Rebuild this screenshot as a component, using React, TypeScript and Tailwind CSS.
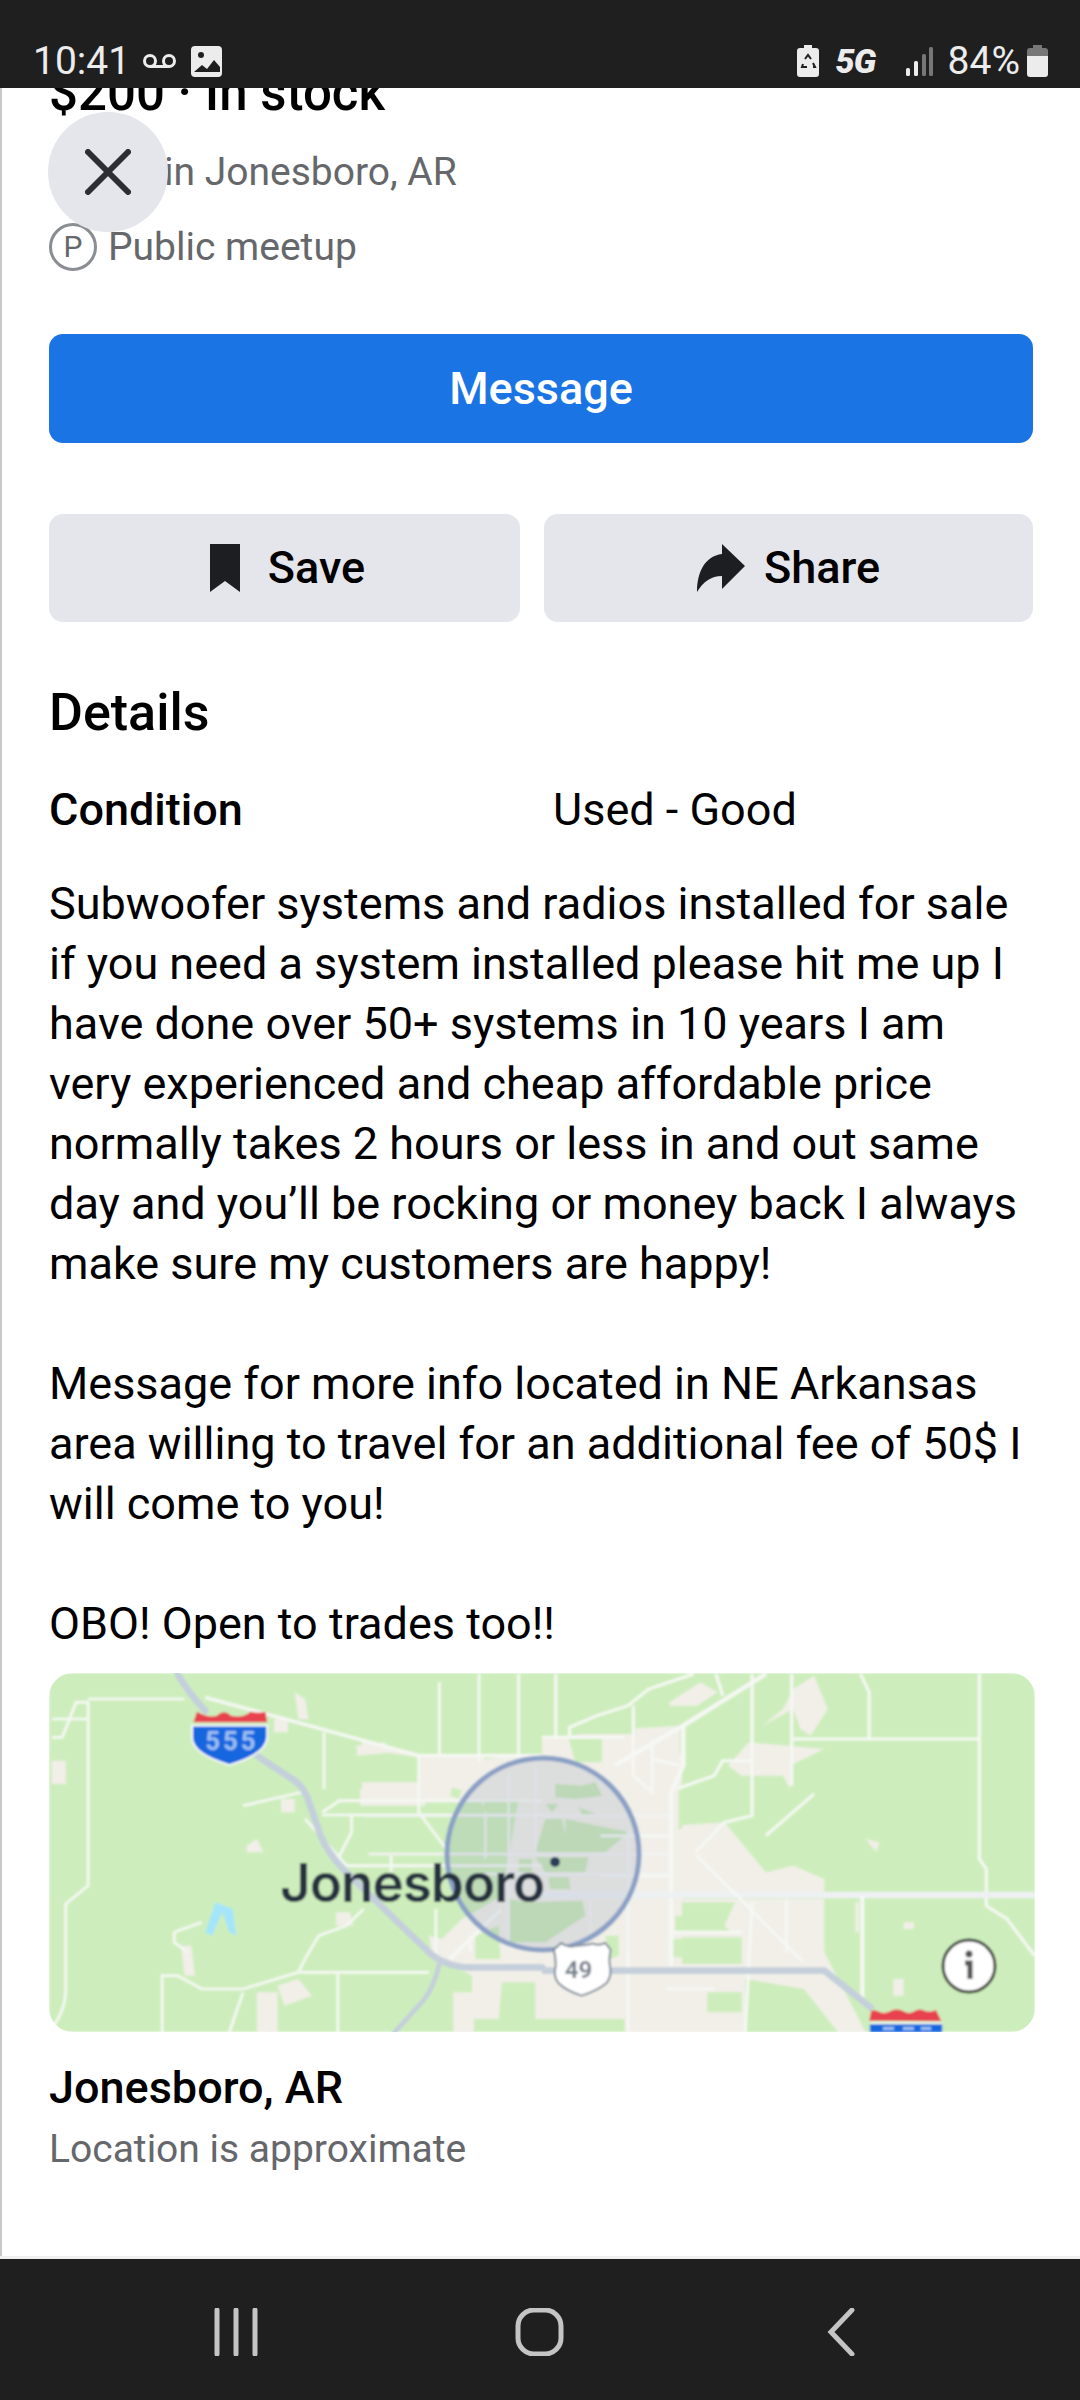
const lines1 = [
  'Subwoofer systems and radios installed for sale',
  'if you need a system installed please hit me up I',
  'have done over 50+ systems in 10 years I am',
  'very experienced and cheap affordable price',
  'normally takes 2 hours or less in and out same',
  'day and you’ll be rocking or money back I always',
  'make sure my customers are happy!',
]

const lines2 = [
  'Message for more info located in NE Arkansas',
  'area willing to travel for an additional fee of 50$ I',
  'will come to you!',
]

const cropLeft = 'translate(0 1660) scale(0.3444 0.3333)'
const cropRight = 'translate(540 1660) scale(0.3444 0.3333)'
const cropCenter = 'translate(360 1720) scale(0.3333)'

function StatusBar() {
  return (
    <div className="relative z-10 flex h-[88px] items-end justify-between bg-[#1f1f1f] pb-[4px] pl-[33px] pr-[32px] text-[39px] leading-[46px] text-[#ececec]">
      <div className="flex items-center">
        <span>10:41</span>
        <svg viewBox="0 0 35 14" className="ml-[12px] h-[14px] w-[35px]" fill="none" stroke="#ececec" strokeWidth="3">
          <circle cx="8" cy="7" r="5.5" />
          <circle cx="27" cy="7" r="5.5" />
          <path d="M8 12.5h19" />
        </svg>
        <svg viewBox="0 0 31 31" className="ml-[14px] h-[31px] w-[31px]">
          <rect width="31" height="31" rx="4" fill="#ececec" />
          <circle cx="10" cy="9" r="3" fill="#1f1f1f" />
          <path d="M3 26l8-7 5 4 7-9 6 7v5z" fill="#1f1f1f" />
        </svg>
      </div>
      <div className="flex items-center">
        <svg viewBox="0 0 22 32" className="h-[32px] w-[22px]">
          <path d="M7 0h8v3h4a3 3 0 0 1 3 3v23a3 3 0 0 1-3 3H3a3 3 0 0 1-3-3V6a3 3 0 0 1 3-3h4z" fill="#ececec" />
          <path d="M8 14l3-4 3 4M6 19l-1 3h5M16 22h2l-2-4" fill="none" stroke="#1f1f1f" strokeWidth="2" />
        </svg>
        <span className="ml-[17px] w-[44px] text-[34px] font-black italic leading-none tracking-[-1px]">5G</span>
        <svg viewBox="0 0 27 29" className="ml-[26px] h-[29px] w-[27px]">
          <rect x="0" y="21" width="4" height="8" rx="1.5" fill="#ececec" />
          <rect x="8" y="14" width="4" height="15" rx="1.5" fill="#ececec" />
          <rect x="16" y="7" width="4" height="22" rx="1.5" fill="#777" />
          <rect x="23" y="0" width="4" height="29" rx="1.5" fill="#777" />
        </svg>
        <span className="ml-[15px]">84%</span>
        <svg viewBox="0 0 21 32" className="ml-[7px] h-[32px] w-[21px]">
          <path d="M6 0h9v3h3a3 3 0 0 1 3 3v6H0V6a3 3 0 0 1 3-3h3z" fill="#777" />
          <path d="M0 11h21v18a3 3 0 0 1-3 3H3a3 3 0 0 1-3-3z" fill="#ececec" />
        </svg>
      </div>
    </div>
  )
}

function MapDrawing() {
  return (
    <svg viewBox="47 1674 986 359" className="block h-[359px] w-[986px]">
      <defs>
        <filter id="soft" x="-2%" y="-2%" width="104%" height="104%">
          <feGaussianBlur stdDeviation="0.9" />
        </filter>
      </defs>
      <g filter="url(#soft)">
        <rect x="47" y="1674" width="986" height="359" fill="#cdeebc" />

        {/* land use, left side */}
        <g transform={cropLeft} fill="#f1efe8">
          <path d="M145 305h40v70h-40zM790 180h40v40h-40zM850 100l30 20l10 60h-30zM1030 260l80 -10l30 30l-110 10zM810 420h40v40h-40zM710 560l30 -20l20 40h-50zM520 860l30 0l10 90h-30zM1240 830l40 10l10 60h-40zM970 760h40l10 40h-50zM740 1000h60v120h-60zM800 980l60 -20l40 50l-80 30z" />
          <path d="M1040 390L1210 380V290H1400V440H1040z" />
          <path d="M1310 1000h60v120h-60z" />
          <path d="M620 730l50 20l10 80l-20 -10l-20 -60l-30 70l-20 -10z" fill="#a5e5fb" />
        </g>

        {/* land use, right side */}
        <g transform={cropRight} fill="#f1efe8">
          <path d="M0 240L240 210L400 200V400L380 420V710H0z" />
          <path d="M380 500L530 490L650 640L730 620L820 660V710H380z" />
          <path d="M240 720H820V880L940 1120H240z" />
          <path d="M370 130l90 -60l50 30l-60 40h-80zM640 200l60 -50l30 -60l60 -40l40 100l-50 80l-30 -20l-20 -60zM540 320l60 -70l220 20l-100 50v70l-20 -40h-120zM940 540l40 10l-10 30zM1050 790h30v20h-30zM1020 960h30v50h-30zM900 730h20v90h-20z" />
          <g fill="#cdeebc">
            <path d="M400 730h160l-30 70l20 20H390zM380 835h200v80H400zM480 1000h100v60H480zM820 730h90v150l-90 -30z" />
            <path d="M590 960l170 30l100 130H590z" />
          </g>
        </g>

        {/* land use, around the circle */}
        <g transform={cropCenter}>
          <path d="M170 110L330 125L480 105H960V900H330V770L250 730L210 690L300 600L420 530L470 240H170z" fill="#f1efe8" />
          <path d="M0 60L170 105V115L0 90zM0 190H170V250H0z" fill="#f1efe8" />
          <g fill="#cdeebc">
            <path d="M240 0H340V100L280 90L240 100zM360 0H440V100H400zM470 0H580V50L470 60zM620 60H720V130H640zM590 0H820V45H590z" />
            <path d="M190 250H360V285H190zM200 300H360L430 350L400 400H210z" />
            <path d="M420 790H520V900H410zM340 650L410 620L415 720H340z" />
            <path d="M940 590H960V640H940zM930 660H960V715H930zM950 200H960V330H950z" />
            <path d="M270 205L300 215L290 240L265 230z" />
          </g>
          <path d="M580 195L660 200L700 190L720 230L640 240L580 235zM550 255H590L570 280zM650 265L700 285H660zM610 300L800 340L730 400H520L550 300H600L610 350zM520 415H680L670 460H550zM560 475H620L625 510H565zM500 550L660 545L670 590L550 670L440 670L440 540zM470 420H510V460H470z" fill="#cbe9ba" />
          <path d="M730 650H770V710L745 720z" fill="#cdeebc" />
        </g>

        {/* minor roads */}
        <g transform={cropLeft} stroke="#f6f8f4" strokeWidth="8" fill="none">
          <path d="M145 235H175L215 130H250V680L185 735V1000Q180 1060 150 1100" />
          <path d="M250 120H530" />
          <path d="M145 180H250" />
          <path d="M590 115L1210 290H1568" strokeWidth="10" />
          <path d="M935 220V390" />
          <path d="M1270 70V290M1385 45V310M1500 45V300" />
          <path d="M700 440L870 400" />
          <path d="M930 460L980 425H1568M930 468H1568" />
          <path d="M1210 290V460L1290 570" />
          <path d="M1015 470V520L980 590V620H1568" />
          <path d="M1130 590V640" />
          <path d="M500 820L580 790M500 820V850L540 880" />
          <path d="M465 1120V950H510L580 990H700L860 940L880 900L920 830L1000 800L1050 750" />
          <path d="M700 1000L660 1120M860 940H1240M975 945V1120" />
          <path d="M1260 750V900M1360 880V830" />
          <path d="M1300 900L1450 750" strokeWidth="12" />
          <path d="M880 480L1000 620" />
        </g>
        <g transform={cropRight} stroke="#f6f8f4" strokeWidth="9" fill="none">
          <path d="M650 45L410 200L210 320" strokeWidth="13" />
          <path d="M40 45V240M0 235H240M80 230V205L160 170L250 140L310 90L440 45" />
          <path d="M505 45L525 110" />
          <path d="M265 140V350L320 400V240M320 300L400 320" />
          <path d="M410 200V320L375 400V920" strokeWidth="13" />
          <path d="M390 390L500 350L525 305H610V470L530 490L445 580" />
          <path d="M610 45V300M725 45V380M725 240H950V100L925 45M950 240H1270V45" />
          <path d="M1270 45V600L1290 630V740L1350 780L1430 890" />
          <path d="M650 530L790 405" />
          <path d="M0 708H1430" stroke="#eef1f3" strokeWidth="20" />
          <path d="M930 710V1020" strokeWidth="12" />
          <path d="M450 590L760 910M610 730L590 1120M710 720V880M250 720V1120M360 990H500M380 820H580" />
          <path d="M170 530H380M170 650H380" />
        </g>
        <g transform={cropCenter} stroke="#f3f4f4" strokeWidth="7" fill="none">
          <path d="M0 290H920M20 405H920M350 465H920M440 160V690M520 140V400M685 540V660M800 330V700M370 280V420" />
        </g>

        {/* highways */}
        <g transform={cropLeft} stroke="#c4cfdb" strokeWidth="20" fill="none" strokeLinecap="round">
          <path d="M510 45Q540 100 590 155M740 290L850 365Q880 385 895 440L925 530Q950 590 1000 640L1230 870Q1270 915 1340 925H1568" />
          <path d="M1270 915Q1250 1000 1210 1040L1140 1120" strokeWidth="14" />
        </g>
        <path transform={cropRight} d="M0 935H820L960 1050" stroke="#c4cfdb" strokeWidth="20" fill="none" />

        {/* interstate shields */}
        <g transform={cropLeft}>
          <path d="M556 190L566 158Q600 178 624 170Q645 150 665 170Q700 178 722 158Q745 165 765 158L770 190z" fill="#e8434f" />
          <path d="M552 200H770V235Q768 285 660 318Q552 285 552 235z" fill="#1266e0" stroke="#fff" strokeWidth="5" />
          <text x="590" y="272" fontFamily="Roboto, sans-serif" fontWeight="700" fontSize="75" fill="#9cc0f2" textLength="146">555</text>
        </g>
        <g transform={cropRight}>
          <path d="M950 1085l6 -30q12 -4 24 4q14 8 34 -4q20 -8 40 4q14 8 30 -4q16 -8 30 2q16 4 30 -4l16 34z" fill="#e8434f" />
          <rect x="952" y="1096" width="210" height="24" fill="#1266e0" />
          <path d="M952 1092h210" stroke="#fff" strokeWidth="5" />
          <path d="M990 1108h32M1048 1108h32M1100 1108h30" stroke="#9cc0f2" strokeWidth="10" />
        </g>

        {/* accuracy circle */}
        <circle cx="541" cy="1855" r="96" fill="#6f83aa" fillOpacity="0.16" stroke="#8ba0c6" strokeWidth="5" />
        <circle cx="553" cy="1863" r="5" fill="#2c3e5c" />

        {/* US 49 shield */}
        <g transform={cropCenter}>
          <path d="M598 672Q620 688 642 680Q670 678 692 674Q712 682 730 672L746 692Q740 722 744 742Q750 772 734 792Q704 816 659 830Q614 816 589 792Q573 772 581 742Q581 712 575 692z" fill="#fff" stroke="#7f8b98" strokeWidth="6" />
          <text x="608" y="776" fontFamily="Roboto, sans-serif" fontWeight="700" fontSize="72" fill="#7a8490">49</text>
        </g>

        {/* city label */}
        <text x="278" y="1903" fontFamily="Inter, Roboto, sans-serif" fontWeight="600" fontSize="53" fill="#263340" letterSpacing="-1">Jonesboro</text>

        {/* info button */}
        <circle cx="967" cy="1967" r="26" fill="#fff" stroke="#3a3f3a" strokeWidth="3" />
        <circle cx="967" cy="1955" r="3.5" fill="#555" />
        <path d="M963 1964h5v16" stroke="#555" strokeWidth="5" fill="none" />
      </g>
    </svg>
  )
}

export default function App() {
  return (
    <div className="relative flex h-[2400px] w-[1080px] flex-col overflow-hidden bg-white font-['Roboto',sans-serif]">
      <StatusBar />

      <div className="relative flex-1 overflow-hidden border-l-2 border-[#c9c9c9] pl-[47px] pr-[47px]">
        <div className="mt-[-22px] text-[51px] font-medium leading-[54px] text-black">$200 · In stock</div>

        <div className="mt-[29px] pl-[115px] text-[39px] leading-[46px] text-[#65676b]">in Jonesboro, AR</div>

        <div className="mt-[28px] flex items-center text-[39px] leading-[46px] text-[#65676b]">
          <div className="flex h-[48px] w-[48px] items-center justify-center rounded-full border-[3px] border-[#8a8d91]">
            <span className="text-[30px] leading-none">P</span>
          </div>
          <span className="ml-[11px]">Public meetup</span>
        </div>

        <div className="mt-[63px] flex h-[109px] items-center justify-center rounded-[14px] bg-[#1b74e4] text-[45px] font-medium text-white">
          Message
        </div>

        <div className="mt-[71px] flex gap-[24px]">
          <div className="flex h-[108px] w-[471px] items-center justify-center rounded-[14px] bg-[#e4e6eb] pl-[6px] text-[45px] font-medium text-black">
            <svg viewBox="0 0 30 48" className="mr-[28px] h-[48px] w-[30px]">
              <path d="M0 0h30v48L15 37L0 48z" fill="#1c1e21" />
            </svg>
            Save
          </div>
          <div className="flex h-[108px] w-[489px] items-center justify-center rounded-[14px] bg-[#e4e6eb] text-[45px] font-medium text-black">
            <svg viewBox="0 0 48 48" className="mr-[19px] h-[48px] w-[48px]">
              <path d="M25 0L48 22L25 45V32C14 32 6 38 0 48C0 28 8 12 25 10z" fill="#1c1e21" />
            </svg>
            Share
          </div>
        </div>

        <div className="mt-[62px] text-[52px] font-medium leading-[58px] text-black">Details</div>

        <div className="mt-[43px] flex text-[45px] leading-[50px] text-black">
          <div className="w-[504px] font-medium">Condition</div>
          <div>Used - Good</div>
        </div>

        <div className="mt-[39px] text-[45px] leading-[60px] text-black">
          {lines1.map((line) => (
            <div key={line} className="whitespace-nowrap">{line}</div>
          ))}
          <div className="h-[60px]" />
          {lines2.map((line) => (
            <div key={line} className="whitespace-nowrap">{line}</div>
          ))}
          <div className="h-[60px]" />
          <div>OBO! Open to trades too!!</div>
        </div>

        <div className="mt-[19px] h-[359px] w-[986px] overflow-hidden rounded-[24px]">
          <MapDrawing />
        </div>

        <div className="mt-[30px] text-[45px] font-medium leading-[52px] text-black">Jonesboro, AR</div>
        <div className="mt-[12px] text-[39px] leading-[46px] text-[#65676b]">Location is approximate</div>
      </div>

      <div className="h-[3px] bg-[#f0f0f0]" />
      <div className="flex h-[141px] items-start bg-[#1f1f1f] pt-[49px]">
        <svg viewBox="0 0 1080 48" className="h-[48px] w-[1080px]" fill="none" stroke="#c4c4c4" strokeLinecap="round">
          <path d="M217 2v44M236 2v44M255 2v44" strokeWidth="5" />
          <rect x="518" y="2" width="43" height="44" rx="16" strokeWidth="5" />
          <path d="M852 2L831 24L852 46" strokeWidth="5" />
        </svg>
      </div>

      <div className="absolute left-[48px] top-[112px] z-0 flex h-[120px] w-[120px] items-center justify-center rounded-full bg-[#e4e6eb]">
        <svg viewBox="0 0 46 46" className="h-[46px] w-[46px]" stroke="#2b2e33" strokeWidth="6" strokeLinecap="round">
          <path d="M3 3L43 43M43 3L3 43" />
        </svg>
      </div>
    </div>
  )
}
